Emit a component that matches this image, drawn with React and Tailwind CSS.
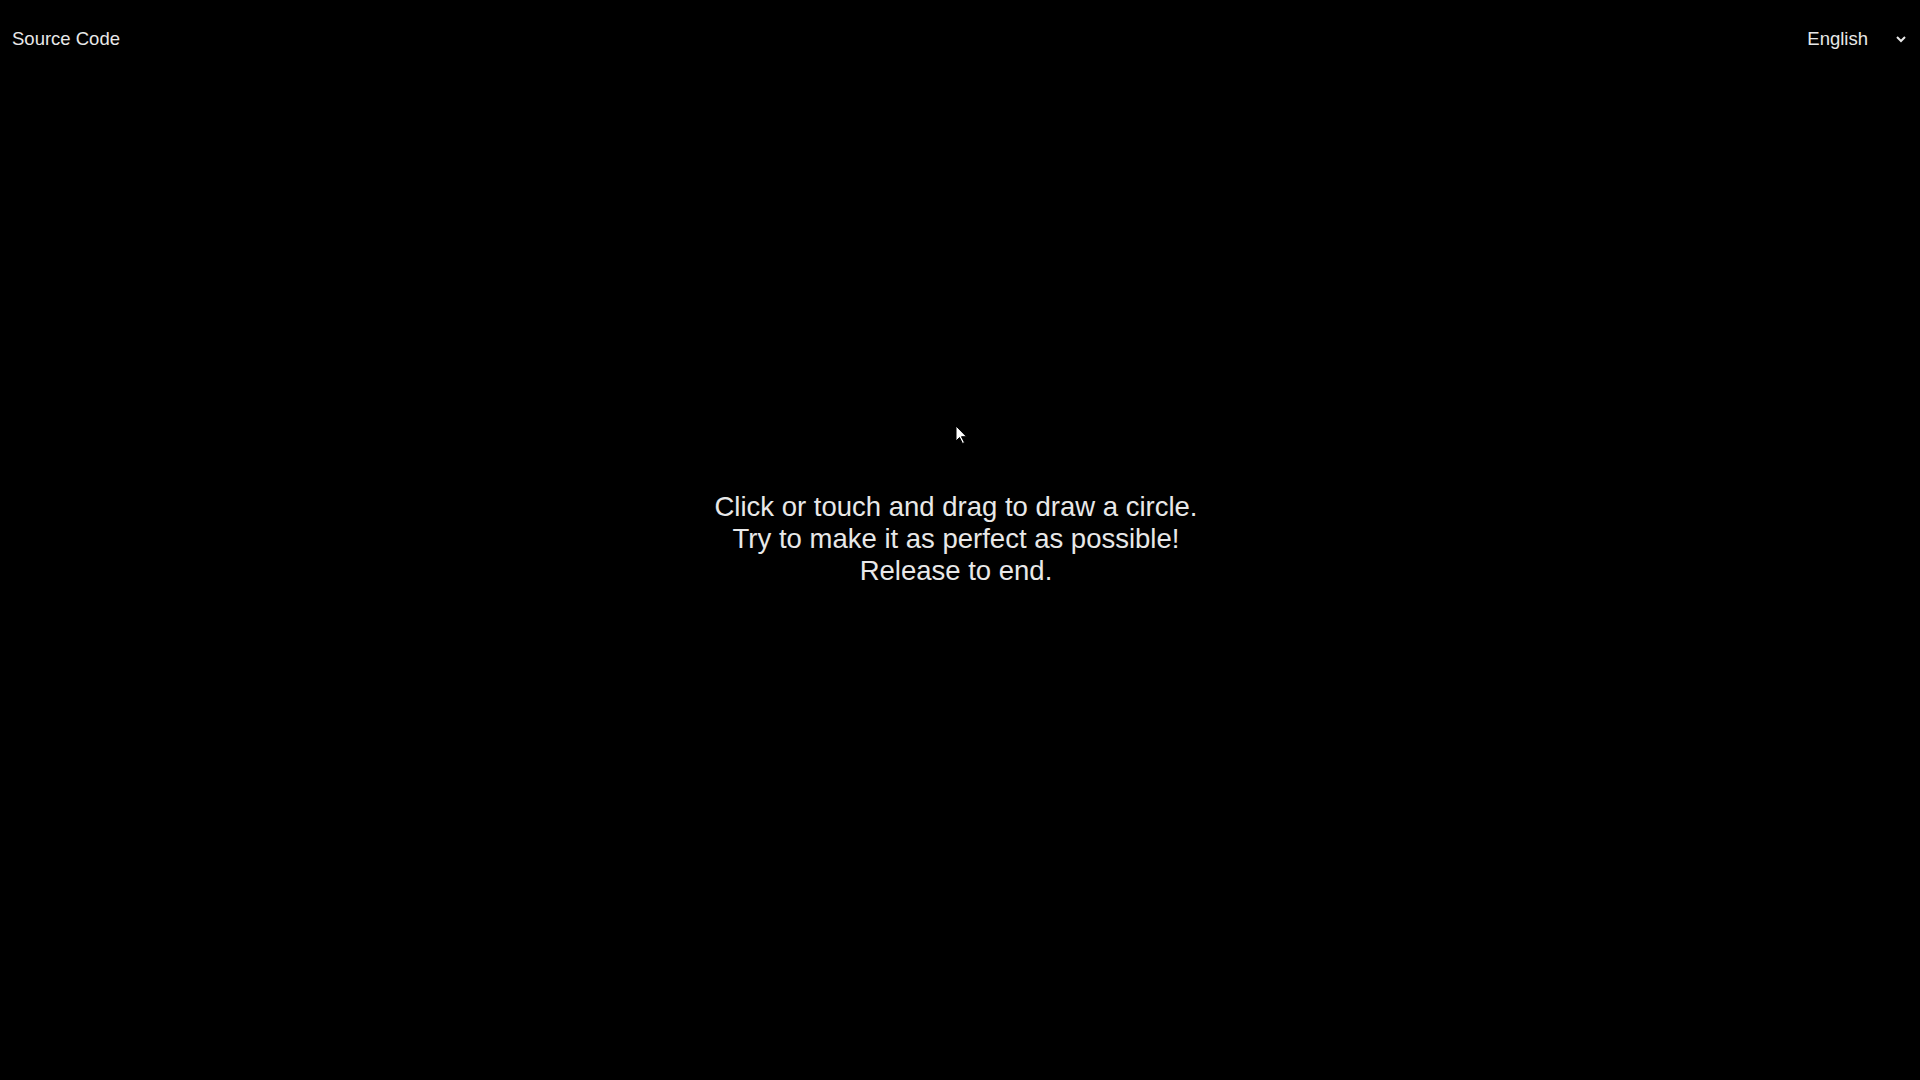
import React from 'react'

const App = () => {
    return (
        <div className="relative h-screen w-full bg-black text-[#e8e8e8] overflow-hidden" style={{fontFamily: '"Liberation Sans", Arial, sans-serif'}}>
            {/*top bar*/}
            <div className="flex justify-between items-center pl-[12px] pr-[14px] pt-[29px]">
                <a className="text-[18.5px] leading-[20px]">Source Code</a>
                <div className="flex items-center text-[18.5px] leading-[20px]">
                    <span>English</span>
                    <svg className="ml-[28px] w-[10px] h-[7px]" viewBox="0 0 10 7" fill="none" stroke="currentColor" strokeWidth="2">
                        <path d="M1 1l4 4 4-4"/>
                    </svg>
                </div>
            </div>
            {/*center text*/}
            <div className="absolute inset-0 flex items-center justify-center pointer-events-none">
                <div className="text-center text-[27.5px] leading-[32px] mr-[8px] mb-[2px]">
                    <div>Click or touch and drag to draw a circle.</div>
                    <div>Try to make it as perfect as possible!</div>
                    <div>Release to end.</div>
                </div>
            </div>
            {/*cursor*/}
            <svg className="absolute left-[955px] top-[425px] w-[13px] h-[20px]" viewBox="0 0 13 20">
                <path d="M1 1v15l3.5-3.5 3 6 2-1-3-5.8h5z" fill="#fff" stroke="#000" strokeWidth="1"/>
            </svg>
        </div>
    )
}

export default App
